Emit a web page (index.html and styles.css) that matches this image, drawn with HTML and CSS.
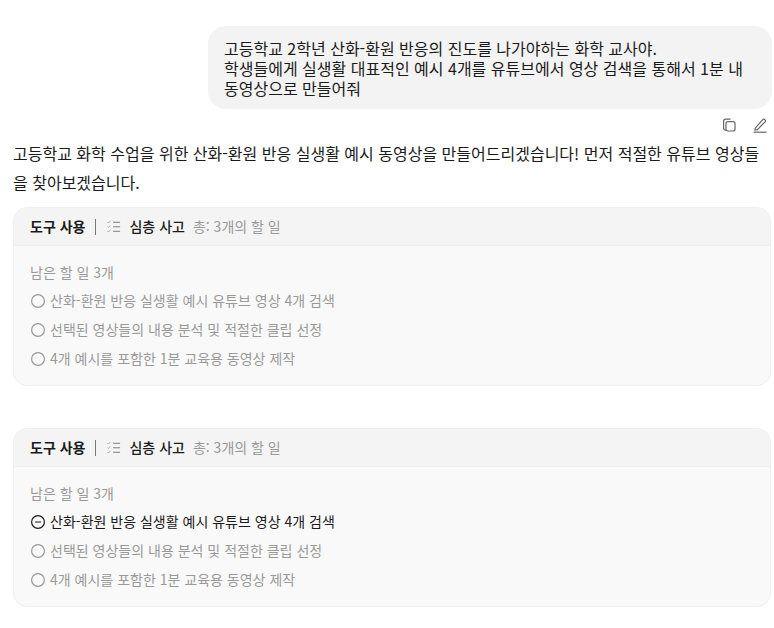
FILE: index.html
```html
<!DOCTYPE html>
<html lang="ko">
<head>
    <meta charset="UTF-8">
    <meta name="viewport" content="width=device-width, initial-scale=1.0">
    <title>Chat</title>
    <link rel="stylesheet" href="styles.css">
</head>
<body>

<div class="chat">
    <div class="user-row">
        <div class="bubble">고등학교 2학년 산화-환원 반응의 진도를 나가야하는 화학 교사야.<br>학생들에게 실생활 대표적인 예시 4개를 유튜브에서 영상 검색을 통해서 1분 내 동영상으로 만들어줘</div>
    </div>

    <div class="actions">
        <svg class="action-icon" viewBox="0 0 16 16"><path d="M5 13.2H4.6A2 2 0 0 1 2.6 11.2V4.2A2 2 0 0 1 4.6 2.2H9.5"/><rect x="5" y="4.6" width="9" height="9.4" rx="2"/></svg>
        <svg class="action-icon" viewBox="0 0 16 16"><path d="M3.2 11.2 10.8 2.6a1.3 1.3 0 0 1 1.9 0l.4.4a1.3 1.3 0 0 1 0 1.8L5.4 12.6 3 13z"/><path d="M1.5 15.2H14.5"/></svg>
    </div>

    <p class="answer">고등학교 화학 수업을 위한 산화-환원 반응 실생활 예시 동영상을 만들어드리겠습니다! 먼저 적절한 유튜브 영상들을 찾아보겠습니다.</p>

    <div class="tool-card">
        <div class="tool-head">
            <span class="tool-label">도구 사용</span>
            <span class="tool-sep"></span>
            <svg class="list-icon" viewBox="0 0 16 16"><path class="faint" d="M1.5 3.2 2.6 4.3 4.6 2M1.5 8 2.6 9.1 4.6 6.8M1.5 12.8 2.6 13.9 4.6 11.6"/><path d="M7.5 3.5H15M7.5 8.3H15M7.5 13.1H15"/></svg>
            <span class="tool-name">심층 사고</span>
            <span class="tool-count">총: 3개의 할 일</span>
        </div>
        <div class="tool-body">
            <div class="todo-title">남은 할 일 3개</div>
            <div class="todo"><svg class="todo-icon" viewBox="0 0 16 16"><circle cx="8" cy="8" r="6.4"/></svg>산화-환원 반응 실생활 예시 유튜브 영상 4개 검색</div>
            <div class="todo"><svg class="todo-icon" viewBox="0 0 16 16"><circle cx="8" cy="8" r="6.4"/></svg>선택된 영상들의 내용 분석 및 적절한 클립 선정</div>
            <div class="todo"><svg class="todo-icon" viewBox="0 0 16 16"><circle cx="8" cy="8" r="6.4"/></svg>4개 예시를 포함한 1분 교육용 동영상 제작</div>
        </div>
    </div>

    <div class="tool-card">
        <div class="tool-head">
            <span class="tool-label">도구 사용</span>
            <span class="tool-sep"></span>
            <svg class="list-icon" viewBox="0 0 16 16"><path class="faint" d="M1.5 3.2 2.6 4.3 4.6 2M1.5 8 2.6 9.1 4.6 6.8M1.5 12.8 2.6 13.9 4.6 11.6"/><path d="M7.5 3.5H15M7.5 8.3H15M7.5 13.1H15"/></svg>
            <span class="tool-name">심층 사고</span>
            <span class="tool-count">총: 3개의 할 일</span>
        </div>
        <div class="tool-body">
            <div class="todo-title">남은 할 일 3개</div>
            <div class="todo active"><svg class="todo-icon" viewBox="0 0 16 16"><circle cx="8" cy="8" r="6.4"/><path d="M5 8H11"/></svg>산화-환원 반응 실생활 예시 유튜브 영상 4개 검색</div>
            <div class="todo"><svg class="todo-icon" viewBox="0 0 16 16"><circle cx="8" cy="8" r="6.4"/></svg>선택된 영상들의 내용 분석 및 적절한 클립 선정</div>
            <div class="todo"><svg class="todo-icon" viewBox="0 0 16 16"><circle cx="8" cy="8" r="6.4"/></svg>4개 예시를 포함한 1분 교육용 동영상 제작</div>
        </div>
    </div>
</div>

</body>
</html>
```

FILE: styles.css
```css
body {
    margin: 0;
    background: #ffffff;
    font-family: "Noto Sans CJK KR", "Noto Sans", sans-serif;
    color: #1a1a1a;
}

.chat {
    padding: 26px 3px 0 13px;
}

.user-row {
    display: flex;
    justify-content: flex-end;
    margin-right: -1px;
}

.bubble {
    width: 532px;
    padding: 12px 16px 11px;
    background: #f3f3f3;
    border-radius: 18px;
    font-size: 16px;
    line-height: 20px;
}

.actions {
    display: flex;
    justify-content: flex-end;
    gap: 15px;
    padding: 8px 3px 0 0;
    height: 16px;
}

.action-icon {
    width: 16px;
    height: 16px;
    fill: none;
    stroke: #666666;
    stroke-width: 1.2;
}

.answer {
    margin: 6px 0 0;
    font-size: 16px;
    line-height: 29px;
    word-break: break-all;
}

.tool-card {
    margin-bottom: 42px;
    margin-top: 10px;
    background: #f9f9f9;
    border: 1px solid #efefef;
    border-radius: 14px;
    overflow: hidden;
}

.tool-head {
    display: flex;
    align-items: center;
    height: 35px;
    padding: 0 16px 2px;
    background: #f4f4f4;
    border-bottom: 1px solid #eeeeee;
    font-size: 14px;
}

.tool-label {
    font-weight: 700;
}

.tool-sep {
    width: 1px;
    height: 16px;
    margin: 2px 10px 0;
    background: #777777;
}

.list-icon {
    width: 15px;
    height: 15px;
    margin-top: 1px;
    fill: none;
    stroke: #777777;
    stroke-width: 1;
}

.list-icon .faint {
    stroke: #aaaaaa;
}

.tool-name {
    margin-left: 8px;
    font-weight: 500;
}

.tool-count {
    margin-left: 8px;
    color: #999999;
}

.tool-body {
    padding: 13px 16px 12px;
    font-size: 14px;
    color: #999999;
}

.todo-title {
    line-height: 27px;
}

.todo {
    display: flex;
    align-items: center;
    gap: 4px;
    line-height: 29px;
}

.todo.active {
    color: #1a1a1a;
}

.todo-icon {
    width: 16px;
    height: 16px;
    fill: none;
    stroke: currentColor;
    stroke-width: 1.2;
}
```
